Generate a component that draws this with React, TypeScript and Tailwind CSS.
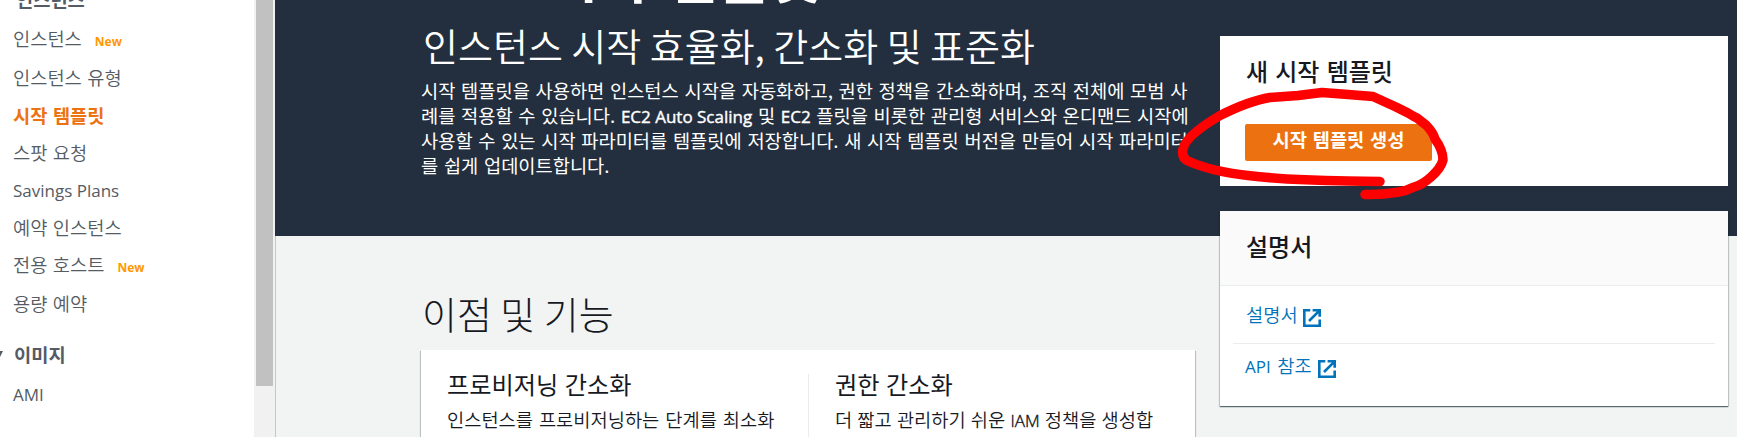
const kr = "font-['Noto_Sans_CJK_KR',sans-serif]";
const latin = "font-['Open_Sans',sans-serif] text-[17px] leading-none [word-spacing:0px]";

function External() {
  return (
    <svg width="18" height="18" viewBox="0 0 18 18" fill="none" stroke="#0073bb" strokeWidth="2.6" className="mt-[6px] shrink-0">
      <path d="M7.3 1.3H1.3V16.7H16.7V10.4" />
      <path d="M9.6 1.3H16.7V7.8M16.2 1.8L6 12" />
    </svg>
  );
}

function NavItem({ label, fresh, active, en, h }: { label: string; fresh?: boolean; active?: boolean; en?: boolean; h: string }) {
  return (
    <li className={`flex items-center ${h} ${en ? latin : ""}`}>
      <a className={active ? "font-bold text-[#ec7211]" : en ? "text-[#545b64]" : "font-[350] text-[#545b64]"}>{label}</a>
      {fresh && <span className="ml-[13px] mt-[7px] font-['Open_Sans',sans-serif] text-[12px] font-bold text-[#ff9900]">New</span>}
    </li>
  );
}

function Sidebar() {
  return (
    <nav className="h-full w-[254px] shrink-0 overflow-hidden bg-white text-[18.7px] leading-[26px] [word-spacing:1.3px]">
      <div className="-mt-[18px] flex h-[34px] items-center pl-4 font-bold text-[#545b64]">인스턴스</div>
      <ul className="pl-[13px] pt-[3px]">
        <NavItem label="인스턴스" fresh h="h-[38px]" />
        <NavItem label="인스턴스 유형" h="h-[39px]" />
        <NavItem label="시작 템플릿" active h="h-[37px]" />
        <NavItem label="스팟 요청" h="h-[38px]" />
        <NavItem label="Savings Plans" en h="h-[38px]" />
        <NavItem label="예약 인스턴스" h="h-[35px]" />
        <NavItem label="전용 호스트" fresh h="h-[40px]" />
        <NavItem label="용량 예약" h="h-[38px]" />
      </ul>
      <div className="mt-[13px] flex h-[38px] items-center">
        <svg width="3" height="6" viewBox="0 0 3 6" className="mr-[11px]"><path d="M0 0H3L0 6Z" fill="#545b64" /></svg>
        <span className="font-bold text-[#545b64]">이미지</span>
      </div>
      <ul className="pl-[13px]"><NavItem label="AMI" en h="h-[43px]" /></ul>
    </nav>
  );
}

function Benefit({ title, children }: { title: string; children: React.ReactNode }) {
  return (
    <div className="whitespace-nowrap text-[#16191f]">
      <h3 className="text-[24.2px] leading-[36px] [word-spacing:1px]">{title}</h3>
      <p className="mt-[4px] text-[18.7px] font-[350] leading-[26px]">{children}</p>
    </div>
  );
}

const cardShadow = "shadow-[0_1px_1px_0_rgba(0,28,36,0.5),1px_1px_1px_0_rgba(0,28,36,0.15),-1px_1px_1px_0_rgba(0,28,36,0.15)]";
const strong = "[-webkit-text-stroke:0.4px_currentColor]";

export default function App() {
  return (
    <div className={`relative flex h-[437px] w-[1737px] overflow-hidden bg-[#f2f3f3] ${kr}`}>
      <Sidebar />
      <div className="h-full w-[21px] shrink-0 bg-[#f1f1f1] px-[2px]">
        <div className="h-[386px] w-[17px] bg-[#c1c1c1]" />
      </div>
      <div className="grid h-full grow grid-cols-[945px_517px] grid-rows-[236px_201px] bg-[linear-gradient(#232f3e_236px,#f2f3f3_236px)]">
        <header className="overflow-hidden whitespace-nowrap pl-[146px] text-white">
          <div className="-mt-[66px] h-[86px] text-[56px] font-bold leading-[80px] [word-spacing:4px]"><span className="mr-[5px] inline-block -translate-y-[3px]">EC2</span> 시작 템플릿</div>
          <h1 className="h-[57px] pl-[2px] text-[38px] font-[350] leading-[50px]">인스턴스 시작 효율화, 간소화 및 표준화</h1>
          <p className="text-[18.7px] font-normal leading-[25px] [word-spacing:1.5px]">
            시작 템플릿을 사용하면 인스턴스 시작을 자동화하고, 권한 정책을 간소화하며, 조직 전체에 모범 사<br />
            례를 적용할 수 있습니다. <span className={`${strong} ${latin}`}>EC2 Auto Scaling</span> 및 <span className={`${strong} ${latin}`}>EC2</span> 플릿을 비롯한 관리형 서비스와 온디맨드 시작에<br />
            사용할 수 있는 시작 파라미터를 템플릿에 저장합니다. 새 시작 템플릿 버전을 만들어 시작 파라미터<br />
            를 쉽게 업데이트합니다.
          </p>
        </header>
        <aside className="row-span-2 pt-[36px]">
          <section className="h-[150px] w-[508px] bg-white pl-[26px] pt-[17px]">
            <h2 className="text-[24px] font-medium leading-[36px] text-[#16191f] [word-spacing:1.8px]">새 시작 템플릿</h2>
            <button className="-ml-px mt-[35px] flex h-[37px] w-[187px] justify-center rounded-[2px] bg-[#ec7211] text-[18.7px] font-bold leading-[30px] text-white [word-spacing:1.5px]">시작 템플릿 생성</button>
          </section>
          <section className={`mt-[25px] h-[195px] w-[508px] bg-white ${cardShadow}`}>
            <h2 className="h-[75px] border-b border-[#eaeded] bg-[#fafafa] pl-[26px] pt-[17px] text-[24px] font-medium leading-[36px] text-[#16191f]">설명서</h2>
            <div className="px-[13px] text-[18.7px] font-[350] text-[#0073bb]">
              <a className="flex h-[58px] items-center gap-[5px] border-b border-[#eaeded] pl-[13px]">설명서 <External /></a>
              <a className="flex h-[43px] items-center gap-[6px] pl-[12px]"><span className="[word-spacing:2.3px]"><span className={`font-normal ${latin}`}>API</span> 참조</span> <External /></a>
            </div>
          </section>
        </aside>
        <main className="overflow-hidden border-l border-[#c3c8c8] pl-[145px] pt-[52px]">
          <h2 className="pl-px text-[38px] font-light leading-[50px] text-[#16191f]">이점 및 기능</h2>
          <section className={`mt-[12px] grid h-[120px] w-[774px] grid-cols-[387px_387px] bg-white pt-[16px] ${cardShadow}`}>
            <div className="pl-[26px] [word-spacing:1.8px]"><Benefit title="프로비저닝 간소화">인스턴스를 프로비저닝하는 단계를 최소화</Benefit></div>
            <div className="mt-[8px] border-l border-[#eaeded] pl-[26px] [word-spacing:1px]"><div className="-mt-[8px]"><Benefit title="권한 간소화">더 짧고 관리하기 쉬운 <span className={`${strong} ${latin}`}>IAM</span> 정책을 생성합</Benefit></div></div>
          </section>
        </main>
      </div>
      <svg className="pointer-events-none absolute left-[1160px] top-[70px]" width="300" height="140" viewBox="1160 70 300 140" fill="none" stroke="#ff0000" strokeWidth="9.5" strokeLinecap="round" strokeLinejoin="round">
        <path d="M1380 181.500L1348 181C1315 180.500 1276 179 1248 175.500C1226 173 1204 168 1189 161.500Q1181 158 1183 149C1185 138 1204 125 1220 115.500C1237 107 1254 100 1270 97.500L1298 95.500L1322 92.500L1348 94.500L1373 96.500L1385 102L1396 107L1402 110L1408 113L1413 116L1417 118L1426 125Q1433 132 1435 139Q1443 150 1443 160Q1441 168 1431 177Q1422 185 1414 187Q1406 191 1399 192Q1381 195 1365 194.500" />
      </svg>
    </div>
  );
}
